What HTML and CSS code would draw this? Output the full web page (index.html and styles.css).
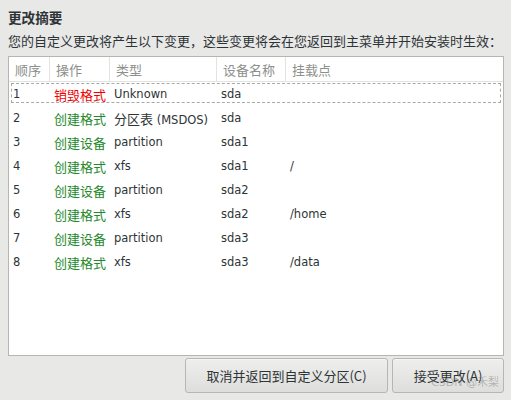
FILE: index.html
```html
<!DOCTYPE html>
<html lang="zh-CN">
<head>
<meta charset="utf-8">
<title>更改摘要</title>
<link rel="stylesheet" href="styles.css">
</head>
<body>
<div class="dialog">
  <h1 class="title">更改摘要</h1>
  <p class="subtitle">您的自定义更改将产生以下变更，这些变更将会在您返回到主菜单并开始安装时生效：</p>
  <div class="table">
    <div class="row head">
      <div class="cell">顺序</div>
      <div class="cell">操作</div>
      <div class="cell">类型</div>
      <div class="cell">设备名称</div>
      <div class="cell">挂载点</div>
    </div>
    <div class="row focus">
      <div class="cell">1</div>
      <div class="cell zh red">销毁格式</div>
      <div class="cell">Unknown</div>
      <div class="cell">sda</div>
      <div class="cell"></div>
    </div>
    <div class="row">
      <div class="cell">2</div>
      <div class="cell zh green">创建格式</div>
      <div class="cell"><span class="zh">分区表</span> (MSDOS)</div>
      <div class="cell">sda</div>
      <div class="cell"></div>
    </div>
    <div class="row">
      <div class="cell">3</div>
      <div class="cell zh green">创建设备</div>
      <div class="cell">partition</div>
      <div class="cell">sda1</div>
      <div class="cell"></div>
    </div>
    <div class="row">
      <div class="cell">4</div>
      <div class="cell zh green">创建格式</div>
      <div class="cell">xfs</div>
      <div class="cell">sda1</div>
      <div class="cell">/</div>
    </div>
    <div class="row">
      <div class="cell">5</div>
      <div class="cell zh green">创建设备</div>
      <div class="cell">partition</div>
      <div class="cell">sda2</div>
      <div class="cell"></div>
    </div>
    <div class="row">
      <div class="cell">6</div>
      <div class="cell zh green">创建格式</div>
      <div class="cell">xfs</div>
      <div class="cell">sda2</div>
      <div class="cell">/home</div>
    </div>
    <div class="row">
      <div class="cell">7</div>
      <div class="cell zh green">创建设备</div>
      <div class="cell">partition</div>
      <div class="cell">sda3</div>
      <div class="cell"></div>
    </div>
    <div class="row">
      <div class="cell">8</div>
      <div class="cell zh green">创建格式</div>
      <div class="cell">xfs</div>
      <div class="cell">sda3</div>
      <div class="cell">/data</div>
    </div>
  </div>
  <div class="buttons">
    <button class="btn btn-cancel">取消并返回到自定义分区(C)</button>
    <button class="btn btn-accept">接受更改(A)<span class="watermark">CSDN @禾梨</span></button>
  </div>
</div>
</body>
</html>
```
FILE: styles.css
```css
html, body {
  margin: 0;
  padding: 0;
  background: #e8e8e7;
}
body {
  width: 511px;
  height: 400px;
  overflow: hidden;
  font-family: "DejaVu Sans", "Noto Sans CJK SC", sans-serif;
  color: #2e3436;
}
.dialog {
  box-sizing: border-box;
  height: 400px;
  padding: 8px 7px 7px 8px;
  display: flex;
  flex-direction: column;
}
.title {
  margin: 0;
  font-family: "Noto Sans CJK SC", sans-serif;
  font-size: 13.6px;
  font-weight: bold;
  line-height: 18px;
  color: #2e3436;
}
.subtitle {
  margin: 6px 0 0 0;
  font-family: "Noto Sans CJK SC", sans-serif;
  font-size: 13px;
  line-height: 18px;
  color: #2e3436;
  white-space: nowrap;
}
.table {
  margin-top: 6px;
  height: 300px;
  box-sizing: border-box;
  border: 1px solid #b5b5b2;
  background: #ffffff;
}
.row {
  position: relative;
  display: grid;
  grid-template-columns: 41px 60px 107px 69px 1fr;
  height: 24px;
  align-items: center;
  font-size: 11.5px;
  color: #2e3436;
}
.row .cell {
  padding-left: 4px;
  white-space: nowrap;
}
.row.head {
  height: 24px;
  border-bottom: 1px solid #e3e3e2;
  align-items: stretch;
}
.row.head .cell {
  box-sizing: border-box;
  padding-left: 6px;
  display: flex;
  align-items: center;
  font-family: "Noto Sans CJK SC", sans-serif;
  font-size: 13px;
  color: #8d8f8c;
  border-right: 1px solid #e3e3e2;
}
.row.head .cell:last-child {
  border-right: none;
}
.zh {
  font-family: "Noto Sans CJK SC", sans-serif;
  font-size: 13px;
}
.red {
  color: #f00000;
}
.green {
  color: #23892a;
}
.row.focus::after {
  content: "";
  position: absolute;
  top: 1px;
  bottom: 3px;
  left: 2px;
  right: 2px;
  border: 1px dashed #a9a9a7;
  pointer-events: none;
}
.buttons {
  margin-top: 2px;
  display: flex;
  justify-content: flex-end;
  gap: 4px;
}
.btn {
  position: relative;
  box-sizing: border-box;
  height: 35px;
  border: 1px solid #b6b6b3;
  border-radius: 3px;
  background: linear-gradient(#eeeeed, #dededc);
  font-family: "Noto Sans CJK SC", sans-serif;
  font-size: 13px;
  color: #2e3436;
  padding: 0;
  box-shadow: inset 0 1px 0 #f6f6f5;
}
.btn-cancel {
  width: 203px;
}
.btn-accept {
  width: 112px;
}
.watermark {
  position: absolute;
  right: 4px;
  bottom: 3px;
  font-family: "DejaVu Sans", "Noto Sans CJK SC", sans-serif;
  font-size: 11px;
  color: rgba(120, 120, 120, 0.45);
  white-space: nowrap;
}
```
